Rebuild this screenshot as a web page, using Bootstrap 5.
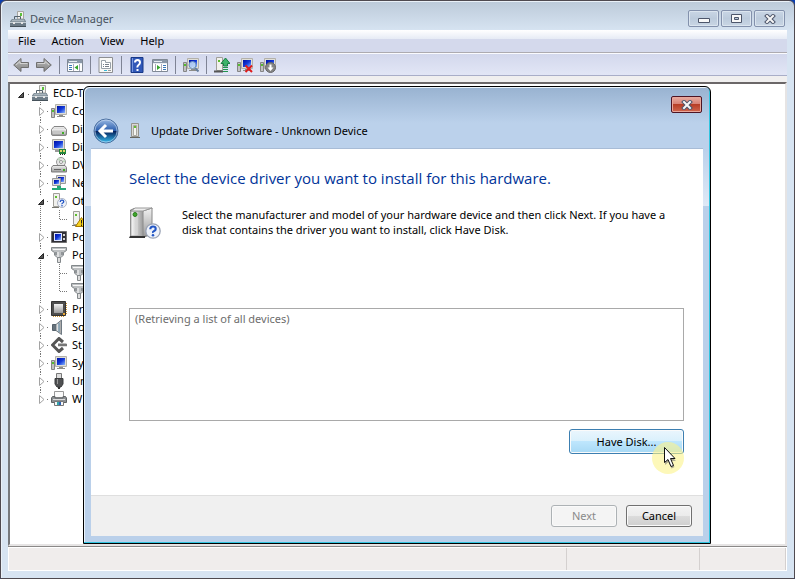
<!DOCTYPE html>
<html lang="en">
<head>
<meta charset="utf-8">
<meta name="viewport" content="width=device-width, initial-scale=1">
<title>Device Manager</title>
<link href="https://cdn.jsdelivr.net/npm/bootstrap@5.3.0/dist/css/bootstrap.min.css" rel="stylesheet">
<style>
  body { font: 11px/16px "Noto Sans", "Open Sans", sans-serif; color: #000; background: #0b3fb0; }
  button { font: inherit; color: inherit; padding: 0; border: 0; background: none; }
  svg { display: block; flex: none; }

  .mgr-window { border: 1px solid #4f4a50; border-radius: 6px 6px 0 0; padding: 0 7px 7px;
    background: linear-gradient(#bccad9, #d7e4f2 30px); box-shadow: inset 1px 1px 0 #eaf1f8; }
  .mgr-title { height: 29px; padding: 6px 2px 0 2px; color: #47535e; }
  .mgr-title .caption-text { padding-top: 4px; }
  .caption-btn { width: 31px; height: 17px; border: 1px solid #8391ac; border-radius: 2px;
    background: linear-gradient(#c9d6e5, #bccbdc 50%, #c9d6e4); box-shadow: inset 0 0 0 1px #dbe5ef; }
  .caption-btns { padding-top: 3px; gap: 2px; }

  .mgr-menu { height: 23px; padding: 0 10px; gap: 16px; border-bottom: 1px solid #adabb0;
    background: linear-gradient(#fff, #e6ebf5 9px, #d4d9ec 9px); }
  .mgr-menu button { white-space: nowrap; }
  .mgr-tools { height: 23px; padding: 0 5px; gap: 7px; border-top: 1px solid #fafbfe; border-bottom: 1px solid #a9aec8;
    background: linear-gradient(#d3d8ec, #e2e6f6); }
  .tool-rule { width: 1px; height: 18px; background: #7f8495; }
  .mgr-gap { height: 6px; background: #f0efef; }

  .mgr-tree { border: 2px solid; border-color: #6b6768 #e6e4e4 #e6e4e4 #77797d; padding-left: 4px; background: #fff; line-height: 18px; }
  .tree-row { height: 18px; }
  .tree-icon { margin: 0 5px 0 2px; }
  .tree-child { padding-left: 19px; }
  .tree-leaf { padding-left: 19px; gap: 3px; }

  .mgr-status { height: 24px; margin-top: 1px; border: 1px solid #fff; background: #f0edec; box-shadow: 0 -1px 0 #8b8988; }
  .status-cell { border-right: 1px solid #d4d0cf; }
  .cell-mid { width: 133px; } .cell-end { width: 86px; }

  .wizard { position: absolute; inset: 85px 83px 34px 82px; border: 1px solid #000; border-radius: 6px 6px 0 0; padding: 0 7px 7px;
    background: linear-gradient(#98b2d0, #bbd1eb 36px, #bbd1eb 62px, #dfe9f6 119px, #bad0ea 119px);
    box-shadow: inset -1px -1px 0 #32c5e0, inset 1px 1px 0 #eaf3fb; }
  .wizard-close { width: 31px; height: 17px; margin: 9px 1px 0 0; border: 1px solid #4d1423; border-radius: 2px;
    background: linear-gradient(#e9aca1, #d88275 45%, #b73e26 50%, #d0664f); box-shadow: inset 0 0 0 1px #e8a79b; }
  .wizard-bar { height: 35px; padding: 0 2px; gap: 10px; }
  .wizard-page { background: #fff; padding: 18px 19px 0 38px; border-top: 1px solid #a8bcd6; }
  .wizard-page h1 { font-family: "Open Sans", sans-serif; font-size: 15px; line-height: 22px; color: #003399; margin: 0 0 18px; font-weight: 400; }
  .wizard-intro { gap: 21px; }
  .wizard-intro p { line-height: 15px; margin: 0; }
  .device-list { border: 1px solid #a9a9a9; margin: 69px 0 8px; padding: 2px 5px; color: #6d6d6d; }
  .push-btn { width: 66px; height: 22px; border: 1px solid #707070; border-radius: 3px;
    background: linear-gradient(#f3f3f3, #ebebeb 50%, #dcdcdc 50%, #cfcfcf); box-shadow: inset 0 0 0 1px #fafafa; }
  .push-btn:disabled { color: #8a8a8a; border-color: #adb2b5; background: #f4f4f4; }
  .push-hot { width: 115px; height: 25px; border-color: #3c7fb1; margin-bottom: 41px;
    background: linear-gradient(#eaf6fd, #d9f0fc 50%, #bee6fd 50%, #a7d9f5); }
  .wizard-foot { height: 41px; padding-right: 11px; gap: 9px; background: #f0f0f0; border-top: 1px solid #dfdfdf; }
  .pointer { position: absolute; right: 25px; bottom: 68px; pointer-events: none; }
</style>
<script src="https://cdn.jsdelivr.net/npm/bootstrap@5.3.0/dist/js/bootstrap.bundle.min.js"></script>
</head>
<body>
<svg width="0" height="0" class="position-absolute" aria-hidden="true">
  <defs>
    <linearGradient id="gScreen" x1="0" y1="0" x2="1" y2="1"><stop offset="0" stop-color="#0010a0"/><stop offset=".5" stop-color="#1238d8"/><stop offset="1" stop-color="#8cb8ff"/></linearGradient>
    <linearGradient id="gMetal" x1="0" y1="0" x2="0" y2="1"><stop offset="0" stop-color="#f2f2f2"/><stop offset="1" stop-color="#9a9a9a"/></linearGradient>
    <linearGradient id="gSide" x1="0" y1="0" x2="1" y2="0"><stop offset="0" stop-color="#fafafa"/><stop offset="1" stop-color="#9b9b9b"/></linearGradient>
    <linearGradient id="gArrow" x1="0" y1="0" x2="0" y2="1"><stop offset="0" stop-color="#b9b9b9"/><stop offset="1" stop-color="#858585"/></linearGradient>
    <linearGradient id="gOrb" x1="0" y1="0" x2="0" y2="1"><stop offset="0" stop-color="#9dbbe4"/><stop offset=".48" stop-color="#2c5fae"/><stop offset=".52" stop-color="#06245f"/><stop offset="1" stop-color="#37c0f2"/></linearGradient>
    <symbol id="closed" viewBox="0 0 16 18"><path d="M7.5 0V4M7.5 15V18M14 9.500H16" stroke="#777" stroke-dasharray="1 1"/><path d="M6.500 5.500V13.500L11 9.500Z" fill="#fff" stroke="#a3a3a3"/></symbol>
    <symbol id="lastClosed" viewBox="0 0 16 18"><path d="M7.500 0V4M14 9.500H16" stroke="#777" stroke-dasharray="1 1"/><path d="M6.500 5.500V13.500L11 9.500Z" fill="#fff" stroke="#a3a3a3"/></symbol>
    <symbol id="opened" viewBox="0 0 16 18"><path d="M7.500 0V4M7.500 14V18M14 9.500H16" stroke="#777" stroke-dasharray="1 1"/><path d="M10.500 7.500V12.500H5.500Z" fill="#555" stroke="#262626"/></symbol>
    <symbol id="rootOpened" viewBox="0 0 16 18"><path d="M14 10.500H16" stroke="#777" stroke-dasharray="1 1"/><path d="M9.500 8.500V13.500H4.500Z" fill="#555" stroke="#262626"/></symbol>
    <symbol id="guide" viewBox="0 0 16 18"><path d="M7.500 0V18" stroke="#777" stroke-dasharray="1 1"/></symbol>
    <symbol id="tee" viewBox="0 0 16 18"><path d="M7.500 0V18M8 9.500H16" stroke="#777" stroke-dasharray="1 1"/></symbol>
    <symbol id="elbow" viewBox="0 0 16 18"><path d="M7.500 0V10M8 9.500H16" stroke="#777" stroke-dasharray="1 1"/></symbol>

    <symbol id="toolbox" viewBox="0 0 16 16"><path d="M7.500.5H13.500V8H7.500Z" fill="#f2f2f0" stroke="#a5a5a0"/><path d="M10 2H12V5H10Z" fill="#5cc13b"/><path d="M4.500 8V5.500H10.500V8" fill="none" stroke="#53616b"/><path d="M0 10.500 2 8H14.500L16 10.500V15.500H0Z" fill="#6d7c87"/><path d="M1 10.500 2.500 8.500H14L15 10.500Z" fill="#a9b5bd"/><path d="M0 11.500H16" stroke="#c4ced4"/><path d="M0 15.500H16" stroke="#45515a"/><path d="M3 11H5V13H3ZM11 11H13V13H11Z" fill="#e6e6e6"/></symbol>
    <symbol id="pc" viewBox="0 0 16 16"><path d="M4.500 1.500H15.500V11.500H4.500Z" fill="#e0dfd8" stroke="#b3b1aa"/><path d="M6 3H14V10H6Z" fill="url(#gScreen)"/><path d="M8 12H12V13H14V14H6V13H8Z" fill="#8d8d88"/><path d="M.5 5.500H3.500V14.500H.5Z" fill="#c2c2c2" stroke="#858585"/><path d="M1 7H3V9H1Z" fill="#55bd2f"/></symbol>
    <symbol id="disk" viewBox="0 0 16 16"><path d="M3 5.500H13L15.500 8.500V13Q15.500 14.500 14 14.500H2Q.5 14.500.5 13V8.500Z" fill="url(#gMetal)" stroke="#858585"/><path d="M1 9H15" stroke="#fff"/><path d="M2 9.500H14V13H2Z" fill="#c6c6c6"/><path d="M11 11H13V13H11Z" fill="#3fae26"/></symbol>
    <symbol id="display" viewBox="0 0 16 16"><path d="M1.500.5H13.500V10.500H1.500Z" fill="#dfded8" stroke="#aaa8a2"/><path d="M3 2H12V9H3Z" fill="url(#gScreen)"/><path d="M4 11H9V13H4Z" fill="#999"/><path d="M8 10H15V15H8Z" fill="#24863b"/><path d="M9 11H11V13H9ZM12 11H14V13H12Z" fill="#e2d66c"/><path d="M9 15.500H15" stroke="#222" stroke-dasharray="1 1"/></symbol>
    <symbol id="optical" viewBox="0 0 16 16"><circle cx="10" cy="5" r="4.500" fill="#e6e6e6" stroke="#999"/><path d="M10 5 7 1M10 5 14 4" stroke="#b9d8b9" stroke-width="1.500"/><circle cx="10" cy="5" r="1.500" fill="#fff" stroke="#999"/><path d="M2 8.500H14L15.500 10.500V15H.5V10.500Z" fill="url(#gMetal)" stroke="#7e7e7e"/><path d="M3 12H10V13H3Z" fill="#666"/><path d="M12 12H14V14H12Z" fill="#3fae26"/></symbol>
    <symbol id="net" viewBox="0 0 16 16"><path d="M5.500.5H14.500V8.500H5.500Z" fill="#ddd" stroke="#999"/><path d="M7 2H13V7H7Z" fill="url(#gScreen)"/><path d="M1.500 3.500H9.500V10.500H1.500Z" fill="#ddd" stroke="#999"/><path d="M3 5H8V9H3Z" fill="url(#gScreen)"/><path d="M6 11H10V13H15V15H1V13H6Z" fill="#27a977"/></symbol>
    <symbol id="qball" viewBox="0 0 10 10"><circle cx="5" cy="5" r="4.500" fill="#eef2fa" stroke="#9aa3b5" stroke-width=".8"/><path d="M3.300 3.900Q3.300 2.200 5 2.200T6.700 3.700Q6.700 4.500 5.700 5T5 6.200" fill="none" stroke="#2457c5" stroke-width="1.300"/><circle cx="5" cy="7.700" r=".8" fill="#2457c5"/></symbol>
    <symbol id="tower" viewBox="0 0 16 16"><path d="M4.500.5H11.500V13.500H4.500Z" fill="#d9d9d4" stroke="#94938c"/><path d="M6.500 2.500H9.500V12.500H6.500Z" fill="#f6f6f2" stroke="#aaa9a2"/><path d="M7 3H9V5H7Z" fill="#5fbf2f"/><path d="M3 14.500H13" stroke="#66665f"/></symbol>
    <symbol id="other" viewBox="0 0 16 16"><path d="M2.500.5H8.500V13.500H2.500Z" fill="#f1f1ed" stroke="#a09f98"/><path d="M4 3H6V5H4Z" fill="#5fbf2f"/><path d="M1 14.500H8" stroke="#77776f"/><use href="#qball" x="6" y="5" width="10" height="10"/></symbol>
    <symbol id="warn" viewBox="0 0 16 16"><path d="M2.500.5H8.500V13.500H2.500Z" fill="#f1f1ed" stroke="#a09f98"/><path d="M4 3H6V5H4Z" fill="#5fbf2f"/><path d="M1 14.500H6" stroke="#77776f"/><path d="M10.500 6.500 16 15.500H4.500Z" fill="#f7d21c" stroke="#a87b00"/><path d="M10.500 9V12.500M10.500 13.500V15" stroke="#222"/></symbol>
    <symbol id="portable" viewBox="0 0 16 16"><path d="M.5 2.500H15.500V13.500H.5Z" fill="#2f2f36" stroke="#6f6f6f"/><path d="M3 4H11V12H3Z" fill="#dfe6ff"/><path d="M4 5H10V11H4Z" fill="url(#gScreen)"/><path d="M12 5H14V7H12ZM12 9H14V11H12Z" fill="#d6d6d6"/></symbol>
    <symbol id="port" viewBox="0 0 16 16"><path d="M.5.5H15.500V3.500L12.500 5.500V8L10 10.500H6L3.500 8V5.500L.5 3.500Z" fill="#bdc0c2" stroke="#83888b"/><path d="M2 2.500H14" stroke="#f7f7f7"/><path d="M5 5V8M11 5V8" stroke="#666c70"/><path d="M7 5V10" stroke="#fff"/><path d="M6.500 10.500H9.500V15.500H6.500Z" fill="#ddd" stroke="#83888b"/></symbol>
    <symbol id="cpu" viewBox="0 0 16 16"><path d="M2 15.500H14M15.500 2V14" stroke="#cf9532" stroke-dasharray="1 1"/><path d="M.5.5H14.500V14.500H.5Z" fill="#4e4e4e" stroke="#333"/><path d="M3 3H12V12H3Z" fill="url(#gMetal)"/><path d="M12 12H14V14H12Z" fill="#eba936"/></symbol>
    <symbol id="sound" viewBox="0 0 16 16"><path d="M1.500 5.500H5V11.500H1.500Z" fill="#67737d" stroke="#55616a"/><path d="M5 5.500 10.500 1V15.500L5 11.500Z" fill="url(#gSide)" stroke="#6d7881"/><path d="M8 4V13" stroke="#5d8ba8"/></symbol>
    <symbol id="storage" viewBox="0 0 16 16"><path d="M12 5 8 1.500 1.500 8 8 14.500 12 11" fill="none" stroke="#555" stroke-width="3"/><path d="M7 8H16" stroke="#777" stroke-width="2.500"/><path d="M7 6.500H15" stroke="#bbb"/></symbol>
    <symbol id="usb" viewBox="0 0 16 16"><path d="M5.500.5H10.500V5.500H5.500Z" fill="#ddd" stroke="#777"/><path d="M4 5.500H12V11L10 14H6L4 11Z" fill="#4f5052" stroke="#3b3c3e"/><path d="M6.500 6V11" stroke="#999"/><path d="M8 14V16" stroke="#333" stroke-width="2"/></symbol>
    <symbol id="printer" viewBox="0 0 16 16"><path d="M3.500.5H12.500V6.500H3.500Z" fill="#fbfbfb" stroke="#999"/><path d="M1.500 5.500H4V7H12V5.500H14.500L15.500 7V11.500H.5V7Z" fill="#8b8f92" stroke="#5f6365"/><path d="M2 8.500H14" stroke="#ddd"/><path d="M3.500 10.500H12.500V14.500H3.500Z" fill="#f6f6f6" stroke="#777"/><path d="M6 11H8V14H6Z" fill="#35a6a8"/><path d="M8 11H10V14H8Z" fill="#2f62b5"/></symbol>
    <symbol id="cross" viewBox="0 0 12 10"><path d="M3 2 9 8M9 2 3 8" stroke="#4d566b" stroke-width="4" stroke-linecap="square"/><path d="M3 2 9 8M9 2 3 8" stroke="#f6f6f6" stroke-width="2" stroke-linecap="square"/></symbol>
    <symbol id="arrowL" viewBox="0 0 16 16"><path d="M.7 8 8 1.500V5.500H15.500V10.500H8V14.500Z" fill="url(#gArrow)" stroke="#6f6f6f"/><path d="M3 8 7 4.500V6.500H14.500" fill="none" stroke="#d2d2d2"/></symbol>
  </defs>
</svg>

<main class="mgr-window position-relative d-flex flex-column min-vh-100">
  <header class="mgr-title d-flex">
    <svg width="16" height="16" class="mt-1 me-1"><use href="#toolbox"/></svg>
    <span class="caption-text flex-grow-1">Device Manager</span>
    <div class="caption-btns d-flex">
      <button class="caption-btn d-flex align-items-center justify-content-center" aria-label="Minimize"><svg width="12" height="9"><path d="M.5 4.500H11.500V8.500H.5Z" fill="#f8f8f8" stroke="#4d566b"/></svg></button>
      <button class="caption-btn d-flex align-items-center justify-content-center" aria-label="Maximize"><svg width="12" height="10"><path d="M.5.5H10.500V8.500H.5Z" fill="#f8f8f8" stroke="#4d566b"/><path d="M3.500 3.500H7.500V5.500H3.500Z" fill="#b9c7d8" stroke="#4d566b"/></svg></button>
      <button class="caption-btn d-flex align-items-center justify-content-center" aria-label="Close"><svg width="12" height="10"><use href="#cross"/></svg></button>
    </div>
  </header>

  <nav class="mgr-menu d-flex align-items-center">
    <button>File</button><button>Action</button><button>View</button><button>Help</button>
  </nav>

  <div class="mgr-tools d-flex align-items-center" role="toolbar" aria-label="Tools">
    <button aria-label="Back"><svg width="16" height="16"><use href="#arrowL"/></svg></button>
    <button aria-label="Forward"><svg width="16" height="16" viewBox="0 0 16 16"><g transform="matrix(-1 0 0 1 16 0)"><use href="#arrowL" width="16" height="16"/></g></svg></button>
    <span class="tool-rule"></span>
    <button aria-label="Show console tree"><svg width="16" height="16"><path d="M.5 2.500H15.500V14.500H.5Z" fill="#fff" stroke="#808995"/><path d="M1 3H15V6H1Z" fill="#8b98a9"/><path d="M2 4.500H10M1 6.500H15" stroke="#e8edf2"/><path d="M2 8.500H5M2 10.500H5M2 12.500H5" stroke="#3a78b8"/><path d="M6.500 7V14M12.500 7V14" stroke="#aab"/><path d="M11 8V13L7.500 10.500Z" fill="#35a52c"/></svg></button>
    <span class="tool-rule"></span>
    <button aria-label="Properties"><svg width="16" height="16"><path d="M1 .5H14.500V15.500H1Z" fill="#f8f8f6" stroke="#8d8f92"/><path d="M3.500 5.500V3.500H7.500V5.500H12.500V11.500H3.500Z" fill="#fff" stroke="#98a0a8"/><path d="M5 7.500H6M7 7.500H11M5 9.500H6M7 9.500H11" stroke="#777e88"/><path d="M6 13.500H9" stroke="#34b8d8"/><path d="M10 13.500H13" stroke="#999"/></svg></button>
    <span class="tool-rule"></span>
    <button aria-label="Help topics"><svg width="16" height="16"><path d="M2 .5H14V15.500H2Z" fill="#3158b8" stroke="#183987"/><path d="M3.500 1V15" stroke="#7897df"/><path d="M6 5.500Q6 3 8.500 3T11 5.500Q11 7 9.500 8T8.500 10.500" fill="none" stroke="#fff" stroke-width="2"/><path d="M7.500 12H9.500V14H7.500Z" fill="#fff"/></svg></button>
    <button aria-label="Show action pane"><svg width="16" height="16"><path d="M.5 2.500H15.500V14.500H.5Z" fill="#fff" stroke="#808995"/><path d="M1 3H15V6H1Z" fill="#8b98a9"/><path d="M2 4.500H10M1 6.500H15" stroke="#e8edf2"/><path d="M11 8.500H14M11 10.500H14M11 12.500H14" stroke="#3a78b8"/><path d="M3.500 7V14M9.500 7V14" stroke="#aab"/><path d="M5 8V13L8.500 10.500Z" fill="#35a52c"/></svg></button>
    <span class="tool-rule"></span>
    <button aria-label="Scan for hardware changes"><svg width="16" height="16"><use href="#pc" width="16" height="16"/><circle cx="9.500" cy="8" r="3.500" fill="#c9e2f8" fill-opacity=".85" stroke="#6f93bf"/><path d="M12 11 15.500 14.500" stroke="#667f9d" stroke-width="2"/></svg></button>
    <span class="tool-rule"></span>
    <button aria-label="Update driver"><svg width="16" height="16"><path d="M2.500.5H8.500V13.500H2.500Z" fill="#f1f1ed" stroke="#a09f98"/><path d="M4 3H6V5H4Z" fill="#5fbf2f"/><path d="M0 14.500H9" stroke="#555" stroke-width="2"/><path d="M11.500 1 16 6.500H13.500V9H9.500V6.500H7Z" fill="#3db46a" stroke="#1a7d42"/><path d="M9 10.500H14M9 12.500H14M9 14.500H14" stroke="#22954f"/></svg></button>
    <button aria-label="Uninstall"><svg width="16" height="16"><use href="#pc" width="16" height="16"/><path d="M8.500 8.500 15 15M15 8.500 8.500 15" stroke="#df1b1b" stroke-width="2"/></svg></button>
    <button aria-label="Disable"><svg width="16" height="16"><use href="#pc" width="16" height="16"/><circle cx="10.500" cy="10.500" r="5" fill="#858585" stroke="#666"/><path d="M9.500 7.500H11.500V10.500H13.500L10.500 14 7.500 10.500H9.500Z" fill="#fff"/></svg></button>
  </div>
  <div class="mgr-gap"></div>

  <ul class="mgr-tree list-unstyled mb-0 flex-grow-1">
    <li class="tree-row d-flex align-items-center"><svg width="16" height="18"><use href="#rootOpened"/></svg><svg class="tree-icon" width="16" height="16"><use href="#toolbox"/></svg>ECD-T</li>
    <li class="tree-row tree-child d-flex align-items-center"><svg width="16" height="18"><use href="#closed"/></svg><svg class="tree-icon" width="16" height="16"><use href="#pc"/></svg>Co</li>
    <li class="tree-row tree-child d-flex align-items-center"><svg width="16" height="18"><use href="#closed"/></svg><svg class="tree-icon" width="16" height="16"><use href="#disk"/></svg>Di</li>
    <li class="tree-row tree-child d-flex align-items-center"><svg width="16" height="18"><use href="#closed"/></svg><svg class="tree-icon" width="16" height="16"><use href="#display"/></svg>Di</li>
    <li class="tree-row tree-child d-flex align-items-center"><svg width="16" height="18"><use href="#closed"/></svg><svg class="tree-icon" width="16" height="16"><use href="#optical"/></svg>DV</li>
    <li class="tree-row tree-child d-flex align-items-center"><svg width="16" height="18"><use href="#closed"/></svg><svg class="tree-icon" width="16" height="16"><use href="#net"/></svg>Ne</li>
    <li class="tree-row tree-child d-flex align-items-center"><svg width="16" height="18"><use href="#opened"/></svg><svg class="tree-icon" width="16" height="16"><use href="#other"/></svg>Ot</li>
    <li class="tree-row tree-leaf d-flex align-items-center"><svg width="16" height="18"><use href="#guide"/></svg><svg width="16" height="18"><use href="#elbow"/></svg><svg width="16" height="16"><use href="#warn"/></svg></li>
    <li class="tree-row tree-child d-flex align-items-center"><svg width="16" height="18"><use href="#closed"/></svg><svg class="tree-icon" width="16" height="16"><use href="#portable"/></svg>Po</li>
    <li class="tree-row tree-child d-flex align-items-center"><svg width="16" height="18"><use href="#opened"/></svg><svg class="tree-icon" width="16" height="16"><use href="#port"/></svg>Po</li>
    <li class="tree-row tree-leaf d-flex align-items-center"><svg width="16" height="18"><use href="#guide"/></svg><svg width="16" height="18"><use href="#tee"/></svg><svg width="16" height="16"><use href="#port"/></svg></li>
    <li class="tree-row tree-leaf d-flex align-items-center"><svg width="16" height="18"><use href="#guide"/></svg><svg width="16" height="18"><use href="#elbow"/></svg><svg width="16" height="16"><use href="#port"/></svg></li>
    <li class="tree-row tree-child d-flex align-items-center"><svg width="16" height="18"><use href="#closed"/></svg><svg class="tree-icon" width="16" height="16"><use href="#cpu"/></svg>Pr</li>
    <li class="tree-row tree-child d-flex align-items-center"><svg width="16" height="18"><use href="#closed"/></svg><svg class="tree-icon" width="16" height="16"><use href="#sound"/></svg>So</li>
    <li class="tree-row tree-child d-flex align-items-center"><svg width="16" height="18"><use href="#closed"/></svg><svg class="tree-icon" width="16" height="16"><use href="#storage"/></svg>St</li>
    <li class="tree-row tree-child d-flex align-items-center"><svg width="16" height="18"><use href="#closed"/></svg><svg class="tree-icon" width="16" height="16"><use href="#pc"/></svg>Sy</li>
    <li class="tree-row tree-child d-flex align-items-center"><svg width="16" height="18"><use href="#closed"/></svg><svg class="tree-icon" width="16" height="16"><use href="#usb"/></svg>Un</li>
    <li class="tree-row tree-child d-flex align-items-center"><svg width="16" height="18"><use href="#lastClosed"/></svg><svg class="tree-icon" width="16" height="16"><use href="#printer"/></svg>W</li>
  </ul>

  <footer class="mgr-status d-flex">
    <span class="status-cell flex-grow-1"></span><span class="status-cell cell-mid"></span><span class="status-cell cell-end"></span>
  </footer>

  <section class="wizard d-flex flex-column" role="dialog" aria-labelledby="wizardName">
    <div class="d-flex justify-content-end">
      <button class="wizard-close d-flex align-items-center justify-content-center" aria-label="Close dialog"><svg width="12" height="10"><use href="#cross"/></svg></button>
    </div>
    <div class="wizard-bar d-flex align-items-center">
      <button aria-label="Previous page"><svg width="26" height="26" viewBox="0 0 26 26"><circle cx="13" cy="13" r="12" fill="url(#gOrb)" stroke="#4b6f9f"/><circle cx="13" cy="13" r="11" fill="none" stroke="#c9dcf2" stroke-opacity=".6"/><path d="M20 13H8M13 7 7 13 13 19" fill="none" stroke="#fff" stroke-width="3"/></svg></button>
      <svg width="12" height="16" viewBox="2 0 12 16"><use href="#tower" width="16" height="16"/></svg>
      <span id="wizardName">Update Driver Software - Unknown Device</span>
    </div>
    <div class="wizard-page d-flex flex-column flex-grow-1">
      <h1>Select the device driver you want to install for this hardware.</h1>
      <div class="wizard-intro d-flex">
        <svg width="32" height="32" viewBox="0 0 32 32"><path d="M1 3 5 1H24L19 4V29L14 31H1Z" fill="#777"/><path d="M2 4H14V29H2Z" fill="url(#gSide)" stroke="#aaa"/><path d="M14 4 23 1V26L14 30Z" fill="url(#gMetal)" stroke="#888"/><path d="M2 4 6 1H23L14 4Z" fill="#eee" stroke="#999"/><path d="M8 5V28" stroke="#ddd"/><circle cx="6" cy="7.500" r="2" fill="#3ea82a" stroke="#2b7d1d"/><path d="M1 29H16V31H0Z" fill="#333"/><use href="#qball" x="16" y="16" width="16" height="16"/></svg>
        <p>Select the manufacturer and model of your hardware device and then click Next. If you have a disk that contains the driver you want to install, click Have Disk.</p>
      </div>
      <ul class="device-list list-unstyled flex-grow-1"><li>(Retrieving a list of all devices)</li></ul>
      <button class="push-btn push-hot align-self-end">Have Disk...</button>
    </div>
    <div class="wizard-foot d-flex align-items-center justify-content-end">
      <button class="push-btn" disabled>Next</button>
      <button class="push-btn">Cancel</button>
    </div>
    <svg class="pointer" width="34" height="34" viewBox="0 0 34 34" aria-hidden="true"><circle cx="17" cy="17" r="16" fill="#fbf38a" fill-opacity=".6"/><path d="M14 9V24L17.500 21 20.500 27.500 23.500 26 20.500 20H25Z" fill="#777" fill-opacity=".6"/><path d="M13.500 6.500V21.500L17 18.500 20 25.500 22.500 24.500 19.500 17.500H24Z" fill="#fff" stroke="#111"/></svg>
  </section>
</main>
</body>
</html>
